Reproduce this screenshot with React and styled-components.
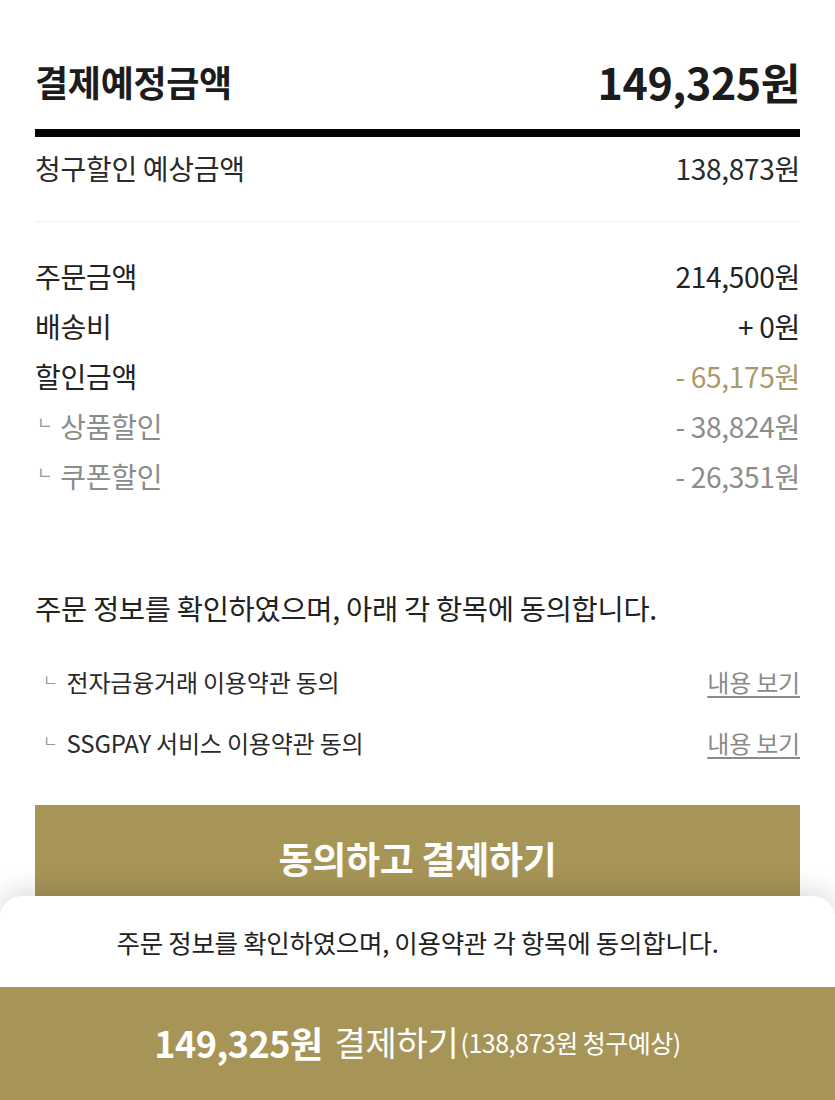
import React from 'react';
import styled, { createGlobalStyle } from 'styled-components';

const GlobalStyle = createGlobalStyle`
  html, body {
    margin: 0;
    padding: 0;
    background: #fff;
  }
  body {
    font-family: "Noto Sans CJK KR", "Noto Sans", sans-serif;
    color: #222;
  }
`;

const GOLD = '#a79558';

const summaryRows = [
  { label: '주문금액', value: '214,500원' },
  { label: '배송비', value: '+ 0원' },
  { label: '할인금액', value: '- 65,175원', tone: 'gold' },
  { label: '상품할인', value: '- 38,824원', sub: true },
  { label: '쿠폰할인', value: '- 26,351원', sub: true },
];

const terms = ['전자금융거래 이용약관 동의', 'SSGPAY 서비스 이용약관 동의'];

const App = () => {
  return (
    <StyledPage>
      <GlobalStyle />
      <StyledContent>
        <StyledTotalRow>
          <h2>결제예정금액</h2>
          <strong>149,325원</strong>
        </StyledTotalRow>
        <StyledThickBar />
        <StyledExpectRow>
          <span>청구할인 예상금액</span>
          <span>138,873원</span>
        </StyledExpectRow>
        <StyledDivider />

        <StyledSummary>
          {summaryRows.map((row) => (
            <StyledRow key={row.label} $sub={row.sub} $tone={row.tone}>
              <span>
                {row.sub && <StyledCorner>ㄴ</StyledCorner>}
                {row.label}
              </span>
              <span>{row.value}</span>
            </StyledRow>
          ))}
        </StyledSummary>

        <StyledStatement>주문 정보를 확인하였으며, 아래 각 항목에 동의합니다.</StyledStatement>

        <StyledTerms>
          {terms.map((term) => (
            <StyledTerm key={term}>
              <span>
                <StyledCorner $small>ㄴ</StyledCorner>
                {term}
              </span>
              <a href="#terms">내용 보기</a>
            </StyledTerm>
          ))}
        </StyledTerms>

        <StyledAgreeButton type="button">동의하고 결제하기</StyledAgreeButton>
      </StyledContent>

      <StyledSheet>
        <StyledNotice>주문 정보를 확인하였으며, 이용약관 각 항목에 동의합니다.</StyledNotice>
        <StyledPayBar type="button">
          <strong>149,325원</strong>
          <span className="label">결제하기</span>
          <span className="hint">(138,873원 청구예상)</span>
        </StyledPayBar>
      </StyledSheet>
    </StyledPage>
  );
};

export default App;

const StyledPage = styled.div`
  position: relative;
  width: 835px;
  height: 1100px;
  overflow: hidden;
  background: #fff;
`;

const StyledContent = styled.div`
  padding: 0 35px;
`;

const StyledTotalRow = styled.div`
  display: flex;
  justify-content: space-between;
  align-items: center;
  height: 50px;
  padding-top: 56px;
  margin-bottom: 23px;
  & > h2 {
    margin: 0;
    font-size: 36px;
    font-weight: 700;
    letter-spacing: -0.3px;
    color: #1c1c1c;
  }
  & > strong {
    font-size: 43px;
    font-weight: 700;
    letter-spacing: -0.4px;
    color: #1c1c1c;
  }
`;

const StyledThickBar = styled.div`
  height: 8px;
  background: #050505;
`;

const StyledExpectRow = styled.div`
  display: flex;
  justify-content: space-between;
  align-items: center;
  height: 62px;
  font-size: 28px;
  letter-spacing: -0.3px;
  color: #2a2a2a;
`;

const StyledDivider = styled.div`
  height: 1px;
  margin-top: 22px;
  background: #f0f0f0;
`;

const StyledSummary = styled.div`
  margin-top: 29px;
`;

const StyledRow = styled.div`
  display: flex;
  justify-content: space-between;
  align-items: center;
  height: 50px;
  font-size: 28px;
  letter-spacing: -0.3px;
  color: ${(p) => (p.$sub ? '#8c8c8c' : '#222')};
  & > span:last-child {
    color: ${(p) => (p.$tone === 'gold' ? '#a99a68' : p.$sub ? '#8c8c8c' : '#222')};
  }
`;

const StyledCorner = styled.span`
  display: inline-block;
  font-size: ${(p) => (p.$small ? '16px' : '17px')};
  color: #999;
  margin: ${(p) => (p.$small ? '0 9px 0 8px' : '0 8px 0 2px')};
  vertical-align: ${(p) => (p.$small ? '6px' : '9px')};
`;

const StyledStatement = styled.p`
  margin: 87px 0 0;
  line-height: 40px;
  font-size: 28.5px;
  letter-spacing: -0.3px;
  color: #222;
`;

const StyledTerms = styled.div`
  display: flex;
  flex-direction: column;
  gap: 21px;
  margin-top: 33px;
`;

const StyledTerm = styled.div`
  display: flex;
  justify-content: space-between;
  align-items: center;
  height: 40px;
  font-size: 24px;
  letter-spacing: -0.2px;
  color: #2a2a2a;
  & > a {
    color: #8a8a8a;
    text-decoration: underline;
    text-underline-offset: 4px;
    text-decoration-thickness: 1.5px;
  }
`;

const StyledAgreeButton = styled.button`
  display: block;
  width: 100%;
  height: 106px;
  margin-top: 43px;
  border: 0;
  background: ${GOLD};
  color: #fff;
  font-family: inherit;
  font-size: 37px;
  font-weight: 700;
  letter-spacing: -0.3px;
`;

const StyledSheet = styled.div`
  position: absolute;
  left: 0;
  right: 0;
  bottom: 0;
  height: 204px;
  background: #fff;
  border-radius: 22px 22px 0 0;
  box-shadow: 0 -8px 24px rgba(0, 0, 0, 0.12);
  display: flex;
  flex-direction: column;
  overflow: hidden;
`;

const StyledNotice = styled.div`
  height: 91px;
  display: flex;
  align-items: center;
  justify-content: center;
  font-size: 25.5px;
  letter-spacing: -0.3px;
  color: #222;
`;

const StyledPayBar = styled.button`
  flex: 1;
  display: flex;
  align-items: center;
  justify-content: center;
  border: 0;
  background: ${GOLD};
  color: #fff;
  font-family: inherit;
  padding: 0 0 4px;
  & > strong {
    font-size: 36px;
    font-weight: 700;
    letter-spacing: -0.5px;
    margin-right: 12px;
  }
  & > .label {
    font-size: 34px;
    letter-spacing: -0.3px;
  }
  & > .hint {
    font-size: 25px;
    letter-spacing: -0.5px;
    margin-left: 2px;
  }
`;
